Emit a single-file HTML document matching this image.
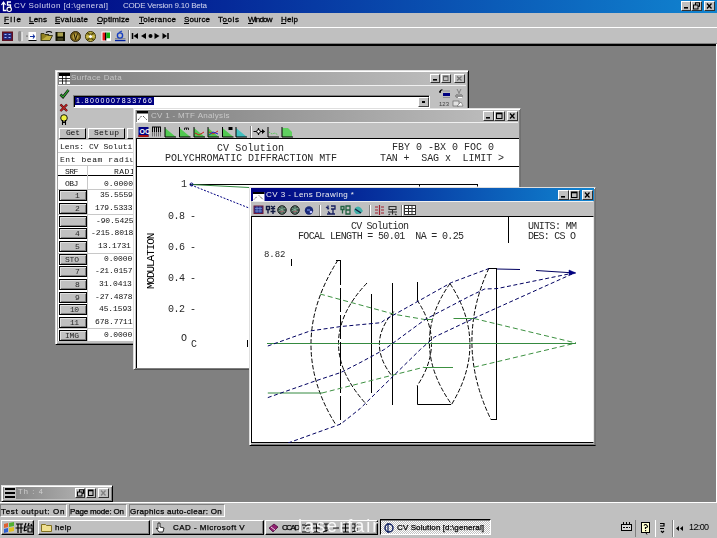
<!DOCTYPE html>
<html><head><meta charset="utf-8">
<style>
*{margin:0;padding:0;box-sizing:border-box}
html,body{width:717px;height:538px;overflow:hidden;background:#808080;font-family:"Liberation Sans",sans-serif;font-size:9px;color:#000}
.a{position:absolute}
.t{position:absolute;white-space:nowrap;line-height:1;will-change:transform}
.raise{position:absolute;background:#c0c0c0;border-top:1px solid #fff;border-left:1px solid #fff;border-right:1px solid #000;border-bottom:1px solid #000}
.cap{position:absolute;background:#c0c0c0;border-top:1px solid #fff;border-left:1px solid #fff;border-right:1px solid #303030;border-bottom:1px solid #303030}
.win{position:absolute;background:#c0c0c0;border-top:1px solid #dfdfdf;border-left:1px solid #dfdfdf;border-right:1px solid #000;border-bottom:1px solid #000;box-shadow:inset 1px 1px 0 #fff,inset -1px -1px 0 #808080}
.sunk{position:absolute;border-top:1px solid #808080;border-left:1px solid #808080;border-right:1px solid #fff;border-bottom:1px solid #fff}
</style></head><body>
<div class="a" style="left:0;top:0;width:717px;height:13px;background:linear-gradient(to right,#000080,#1084d0)"></div>
<svg class="a" style="left:0;top:0" width="13" height="13"><path d="M3.5 2.5v8h3" fill="none" stroke="#fff" stroke-width="1.3"/><path d="M1.5 5l2-3 2 3" fill="none" stroke="#fff" stroke-width="1.2"/><path d="M11 2h-3.5v3h3v2.5" fill="none" stroke="#fff" stroke-width="1.3"/><circle cx="9.2" cy="9.3" r="2.2" fill="#000040" stroke="#fff" stroke-width="1.1"/></svg>
<div class="t" style="left:14.00px;top:2px;font-size:8px;letter-spacing:0.413px;color:#e8e8f8;opacity:0.9;">CV&nbsp;Solution&nbsp;[d:\general]</div>
<div class="t" style="left:123.00px;top:2px;font-size:8px;letter-spacing:-0.214px;color:#e8e8f8;opacity:0.9;">CODE&nbsp;Version&nbsp;9.10&nbsp;Beta</div>
<div class="cap" style="left:681px;top:1px;width:10px;height:10px"></div><svg class="a" style="left:682px;top:2px" width="8" height="8"><rect x="2" y="5" width="4" height="1.6" fill="#000"/></svg>
<div class="cap" style="left:691px;top:1px;width:11px;height:10px"></div><svg class="a" style="left:692px;top:2px" width="9" height="8"><rect x="3.5" y="0.8" width="4" height="3.5" fill="none" stroke="#000" stroke-width="1"/><rect x="1.5" y="3" width="4.5" height="4" fill="#c0c0c0" stroke="#000" stroke-width="1"/></svg>
<div class="cap" style="left:704px;top:1px;width:11px;height:10px"></div><svg class="a" style="left:705px;top:2px" width="9" height="8"><path d="M2 1.5L6.5 6.5M6.5 1.5L2 6.5" stroke="#000" stroke-width="1.3"/></svg>
<div class="a" style="left:0;top:13px;width:717px;height:14px;background:#c0c0c0"></div>
<div class="t" style="left:4.00px;top:16px;font-size:8px;letter-spacing:1.367px;color:#000;-webkit-text-stroke:0.3px #000;">File</div>
<div class="a" style="left:4px;top:23px;width:5px;height:1px;background:#000"></div>
<div class="t" style="left:29.00px;top:16px;font-size:8px;letter-spacing:0.217px;color:#000;-webkit-text-stroke:0.3px #000;">Lens</div>
<div class="a" style="left:29px;top:23px;width:5px;height:1px;background:#000"></div>
<div class="t" style="left:55.00px;top:16px;font-size:8px;letter-spacing:0.264px;color:#000;-webkit-text-stroke:0.3px #000;">Evaluate</div>
<div class="a" style="left:55px;top:23px;width:5px;height:1px;background:#000"></div>
<div class="t" style="left:97.00px;top:16px;font-size:8px;letter-spacing:0.136px;color:#000;-webkit-text-stroke:0.3px #000;">Optimize</div>
<div class="a" style="left:97px;top:23px;width:5px;height:1px;background:#000"></div>
<div class="t" style="left:139.00px;top:16px;font-size:8px;letter-spacing:0.287px;color:#000;-webkit-text-stroke:0.3px #000;">Tolerance</div>
<div class="a" style="left:139px;top:23px;width:5px;height:1px;background:#000"></div>
<div class="t" style="left:184.00px;top:16px;font-size:8px;letter-spacing:0.130px;color:#000;-webkit-text-stroke:0.3px #000;">Source</div>
<div class="a" style="left:184px;top:23px;width:5px;height:1px;background:#000"></div>
<div class="t" style="left:218.00px;top:16px;font-size:8px;letter-spacing:0.575px;color:#000;-webkit-text-stroke:0.3px #000;">Tools</div>
<div class="a" style="left:223px;top:23px;width:5px;height:1px;background:#000"></div>
<div class="t" style="left:248.00px;top:16px;font-size:8px;letter-spacing:-0.780px;color:#000;-webkit-text-stroke:0.3px #000;">Window</div>
<div class="a" style="left:248px;top:23px;width:5px;height:1px;background:#000"></div>
<div class="t" style="left:281.00px;top:16px;font-size:8px;letter-spacing:0.183px;color:#000;-webkit-text-stroke:0.3px #000;">Help</div>
<div class="a" style="left:281px;top:23px;width:5px;height:1px;background:#000"></div>
<div class="a" style="left:0;top:27px;width:717px;height:1px;background:#fff"></div>
<div class="a" style="left:0;top:28px;width:717px;height:16px;background:#c0c0c0"></div>
<svg class="a" style="left:0;top:28px" width="180" height="16">
 <rect x="2" y="3.5" width="11" height="9.5" fill="#601020"/><rect x="3.5" y="5" width="8" height="6.5" fill="#202a80"/><path d="M4.5 6.5h2M8.5 6.5h2M4.5 9.5h2M8.5 9.5h2" stroke="#a0b8ff" stroke-width="1.2"/>
 <rect x="18" y="3" width="3.5" height="10.5" rx="1.7" fill="#8c8c8c"/><path d="M22 4v9" stroke="#fff"/>
 <rect x="28.5" y="4" width="7.5" height="8" fill="#fff"/><path d="M28.5 12.5h8" stroke="#000"/><path d="M30 8.5h4.5M33 6.5l1.5 2-1.5 2" stroke="#1030a0" stroke-width="1.1" fill="none"/><circle cx="27" cy="8" r="0.6" fill="#000"/>
 <path d="M41 12.5l2.5-5h9l-2.5 5z" fill="#c0b040" stroke="#202000" stroke-width="0.8"/><path d="M41 12.5v-7h3l1 1h4" fill="#908020" stroke="#202000" stroke-width="0.8"/><path d="M46 4.5q3-2 6 0" fill="none" stroke="#000" stroke-width="1.2"/>
 <rect x="55.5" y="4" width="9.5" height="9" fill="#101000"/><rect x="57.5" y="4.5" width="5.5" height="4" fill="#a8a050"/><rect x="57.5" y="10" width="5.5" height="2.5" fill="#404020"/>
 <circle cx="75.5" cy="8.5" r="5" fill="#786018" stroke="#201800" stroke-width="0.9"/><circle cx="75.5" cy="8.5" r="3" fill="#b8a040"/><path d="M74 5.5l1.5 6 2-6" stroke="#201800" fill="none"/>
 <circle cx="90.5" cy="8.5" r="5" fill="#c8b848" stroke="#383000" stroke-width="1"/><path d="M87 6h7M87 11h7M88 5l5 7M93 5l-5 7" stroke="#383000" stroke-width="0.8"/><circle cx="90.5" cy="8.5" r="1.6" fill="#fff"/>
 <rect x="101.5" y="3.5" width="9.5" height="9.5" fill="#fff"/><rect x="102.5" y="4.5" width="2.5" height="8" fill="#e01818"/><rect x="105" y="4.5" width="1.5" height="8" fill="#000"/><rect x="106.5" y="4.5" width="3.5" height="6" fill="#10b010"/><rect x="106.5" y="10.5" width="3.5" height="2" fill="#fff"/>
 <path d="M115 12.5h10.5" stroke="#0020a0" stroke-width="1.4"/><path d="M115 10.5h10.5" stroke="#808080" stroke-width="0.8"/><circle cx="120" cy="7.5" r="2.6" fill="none" stroke="#1840c0" stroke-width="1.4"/><path d="M119 4.5l3-1.5" stroke="#1840c0" stroke-width="1.2"/>
 <path d="M128.5 2v13" stroke="#808080"/><path d="M129.5 2v13" stroke="#fff"/>
 <path d="M132.5 5v6" stroke="#000" stroke-width="1.5"/><path d="M138 5l-4.5 3 4.5 3z" fill="#000"/>
 <path d="M146 5l-5 3 5 3z" fill="#000"/><circle cx="150.5" cy="8" r="2" fill="#000"/>
 <path d="M154.5 5l5 3-5 3z" fill="#000"/><path d="M162.5 5l4.5 3-4.5 3z" fill="#000"/><path d="M168 5v6" stroke="#000" stroke-width="1.5"/>
</svg>
<div class="a" style="left:0;top:43px;width:717px;height:1px;background:#808080"></div>
<div class="a" style="left:0;top:44px;width:716px;height:2px;background:#000"></div>
<div class="a" style="left:716px;top:44px;width:1px;height:459px;background:#fff"></div>
<div class="win" style="left:55px;top:70px;width:414px;height:275px"></div>
<div class="a" style="left:58px;top:72px;width:408px;height:13px;background:linear-gradient(to right,#808080,#c0c0c0)"></div>
<svg class="a" style="left:59px;top:73px" width="11" height="11"><rect x="0" y="0" width="11" height="11" fill="#fff"/><rect x="0" y="0" width="11" height="3" fill="#000"/><path d="M0 5.5h11M0 8h11M3.5 3v8M7 3v8" stroke="#000" stroke-width="0.8"/></svg>
<div class="t" style="left:71.00px;top:74px;font-size:8px;letter-spacing:0.355px;color:#c4c4c4;">Surface&nbsp;Data</div>
<div class="a" style="left:58px;top:85px;width:408px;height:1px;background:#f0f0f0"></div>
<div class="cap" style="left:430px;top:74px;width:10px;height:9px"></div><svg class="a" style="left:431px;top:75px" width="8" height="7"><rect x="2" y="4" width="4" height="1.6" fill="#000"/></svg>
<div class="cap" style="left:441px;top:74px;width:10px;height:9px"></div><svg class="a" style="left:442px;top:75px" width="8" height="7"><rect x="1.5" y="1" width="4.5" height="4.5" fill="none" stroke="#606060" stroke-width="1"/><rect x="1.5" y="1" width="4.5" height="1.3" fill="#606060"/></svg>
<div class="cap" style="left:454px;top:74px;width:11px;height:9px"></div><svg class="a" style="left:455px;top:75px" width="9" height="7"><path d="M2 1.5L6.5 5.5M6.5 1.5L2 5.5" stroke="#707070" stroke-width="1.3"/></svg>
<svg class="a" style="left:59px;top:88px" width="12" height="38">
 <path d="M1.5 6.5l2.5 2.5 5.5-7" fill="none" stroke="#000" stroke-width="2.6"/><path d="M1.5 6.5l2.5 2.5 5.5-7" fill="none" stroke="#30a030" stroke-width="1.3"/>
 <path d="M1.5 16.5l6.5 6.5M8 16.5l-6.5 6.5" stroke="#401010" stroke-width="2.4"/><path d="M1.5 16.5l6.5 6.5M8 16.5l-6.5 6.5" stroke="#c02020" stroke-width="1.1"/>
 <circle cx="5" cy="30" r="3.3" fill="#f0f040" stroke="#000" stroke-width="0.9"/><path d="M3.5 32v5M6.5 32v5M3.5 34.5h3" stroke="#000" stroke-width="1.1"/>
</svg>
<div class="a" style="left:73px;top:95px;width:357px;height:13px;background:#fff;border-top:1px solid #808080;border-left:1px solid #808080;border-right:1px solid #fff;border-bottom:1px solid #fff;box-shadow:inset 1px 1px 0 #000"></div>
<div class="a" style="left:75px;top:97px;width:79px;height:8px;background:#000080"></div>
<div class="t" style="left:76.00px;top:97px;font-size:7px;letter-spacing:1.396px;color:#fff;">1.8000007833766</div>
<div class="raise" style="left:418px;top:97px;width:11px;height:10px;border-color:#fff #404040 #404040 #fff"></div>
<div class="a" style="left:422px;top:101px;width:3px;height:2px;background:#000"></div>
<svg class="a" style="left:438px;top:88px" width="28" height="20">
 <path d="M1.5 4.5q1-3 3-2.5" fill="none" stroke="#000" stroke-width="1.2"/><path d="M1 4l2-2 0 3z" fill="#000"/><rect x="5" y="5" width="7" height="3" fill="#000080"/><path d="M5 3h7M5 9.5h7" stroke="#909090"/>
 <path d="M19 1l2 4 2-4M21 5v2" stroke="#808080" fill="none"/><circle cx="19" cy="8" r="1.3" fill="none" stroke="#707070"/><circle cx="23" cy="8" r="1.3" fill="none" stroke="#707070"/><path d="M20 9.5h4" stroke="#fff"/>
 <text x="1" y="18" font-size="6" fill="#404040" font-family="Liberation Sans">123</text>
 <rect x="15" y="13" width="6" height="5" fill="#e0e0e0" stroke="#505050" stroke-width="0.6"/><path d="M19 18l4-4 2 4z" fill="#fff" stroke="#505050" stroke-width="0.5"/>
</svg>
<div class="raise" style="left:59px;top:128px;width:27px;height:11px"></div>
<div class="t" style="left:66.00px;top:129px;font-size:8px;letter-spacing:-0.200px;color:#111;font-family:'Liberation Mono',monospace;">Get</div>
<div class="raise" style="left:88px;top:128px;width:37px;height:11px"></div>
<div class="t" style="left:94.00px;top:129px;font-size:8px;letter-spacing:0.250px;color:#111;font-family:'Liberation Mono',monospace;">Setup</div>
<div class="raise" style="left:127px;top:128px;width:10px;height:11px"></div>
<div class="a" style="left:57px;top:140px;width:78px;height:201px;background:#fff;border-left:1px solid #a0a0a0"></div>
<div class="a" style="left:58px;top:152px;width:76px;height:1px;background:#c8c8c8"></div>
<div class="a" style="left:58px;top:165px;width:76px;height:1px;background:#c8c8c8"></div>
<div class="a" style="left:58px;top:189px;width:76px;height:1px;background:#c8c8c8"></div>
<div class="a" style="left:58px;top:214px;width:76px;height:1px;background:#c8c8c8"></div>
<div class="a" style="left:58px;top:253px;width:76px;height:1px;background:#c8c8c8"></div>
<div class="a" style="left:58px;top:328px;width:76px;height:1px;background:#c8c8c8"></div>
<div class="a" style="left:58px;top:175px;width:76px;height:1px;background:#000"></div>
<div class="a" style="left:87px;top:166px;width:1px;height:175px;background:#c8c8c8"></div>
<div class="t" style="left:60.00px;top:143px;font-size:8px;letter-spacing:0.025px;color:#111;font-family:'Liberation Mono',monospace;">Lens:&nbsp;CV&nbsp;Solution</div>
<div class="t" style="left:60.00px;top:156px;font-size:8px;letter-spacing:0.571px;color:#111;font-family:'Liberation Mono',monospace;">Ent&nbsp;beam&nbsp;radius</div>
<div class="t" style="left:65.40px;top:168px;font-size:8px;letter-spacing:-0.500px;color:#111;font-family:'Liberation Mono',monospace;">SRF</div>
<div class="t" style="left:113.70px;top:168px;font-size:8px;letter-spacing:0.500px;color:#111;font-family:'Liberation Mono',monospace;">RADIUS</div>
<div class="t" style="left:65.40px;top:180px;font-size:8px;letter-spacing:-0.500px;color:#111;font-family:'Liberation Mono',monospace;">OBJ</div>
<div class="t" style="left:104.00px;top:180px;font-size:8px;letter-spacing:0.040px;color:#111;font-family:'Liberation Mono',monospace;">0.0000</div>
<div class="a" style="left:59px;top:190px;width:28px;height:11px;background:#c0c0c0;border:1px solid #000;box-shadow:inset 1px 1px 0 #e0e0e0,inset -1px -1px 0 #808080"></div>
<div class="t" style="left:75.00px;top:192px;font-size:8px;letter-spacing:0.000px;color:#282828;font-family:'Liberation Mono',monospace;">1</div>
<div class="t" style="left:99.60px;top:191px;font-size:8px;letter-spacing:-0.117px;color:#111;font-family:'Liberation Mono',monospace;">35.5559</div>
<div class="a" style="left:59px;top:203px;width:28px;height:11px;background:#c0c0c0;border:1px solid #000;box-shadow:inset 1px 1px 0 #e0e0e0,inset -1px -1px 0 #808080"></div>
<div class="t" style="left:75.00px;top:205px;font-size:8px;letter-spacing:0.000px;color:#282828;font-family:'Liberation Mono',monospace;">2</div>
<div class="t" style="left:95.00px;top:204px;font-size:8px;letter-spacing:-0.114px;color:#111;font-family:'Liberation Mono',monospace;">179.5333</div>
<div class="a" style="left:59px;top:216px;width:28px;height:11px;background:#c0c0c0;border:1px solid #000;box-shadow:inset 1px 1px 0 #e0e0e0,inset -1px -1px 0 #808080"></div>
<div class="t" style="left:96.00px;top:217px;font-size:8px;letter-spacing:-0.114px;color:#111;font-family:'Liberation Mono',monospace;">-90.5425</div>
<div class="a" style="left:59px;top:228px;width:28px;height:11px;background:#c0c0c0;border:1px solid #000;box-shadow:inset 1px 1px 0 #e0e0e0,inset -1px -1px 0 #808080"></div>
<div class="t" style="left:75.00px;top:230px;font-size:8px;letter-spacing:0.000px;color:#282828;font-family:'Liberation Mono',monospace;">4</div>
<div class="t" style="left:91.00px;top:229px;font-size:8px;letter-spacing:-0.112px;color:#111;font-family:'Liberation Mono',monospace;">-215.8018</div>
<div class="a" style="left:59px;top:241px;width:28px;height:11px;background:#c0c0c0;border:1px solid #000;box-shadow:inset 1px 1px 0 #e0e0e0,inset -1px -1px 0 #808080"></div>
<div class="t" style="left:75.00px;top:243px;font-size:8px;letter-spacing:0.000px;color:#282828;font-family:'Liberation Mono',monospace;">5</div>
<div class="t" style="left:98.00px;top:242px;font-size:8px;letter-spacing:-0.117px;color:#111;font-family:'Liberation Mono',monospace;">13.1731</div>
<div class="a" style="left:59px;top:254px;width:28px;height:11px;background:#c0c0c0;border:1px solid #000;box-shadow:inset 1px 1px 0 #e0e0e0,inset -1px -1px 0 #808080"></div>
<div class="t" style="left:65.00px;top:256px;font-size:8px;letter-spacing:-0.200px;color:#282828;font-family:'Liberation Mono',monospace;">STO</div>
<div class="t" style="left:104.00px;top:255px;font-size:8px;letter-spacing:-0.120px;color:#111;font-family:'Liberation Mono',monospace;">0.0000</div>
<div class="a" style="left:59px;top:266px;width:28px;height:11px;background:#c0c0c0;border:1px solid #000;box-shadow:inset 1px 1px 0 #e0e0e0,inset -1px -1px 0 #808080"></div>
<div class="t" style="left:75.00px;top:268px;font-size:8px;letter-spacing:0.000px;color:#282828;font-family:'Liberation Mono',monospace;">7</div>
<div class="t" style="left:95.00px;top:267px;font-size:8px;letter-spacing:-0.114px;color:#111;font-family:'Liberation Mono',monospace;">-21.0157</div>
<div class="a" style="left:59px;top:279px;width:28px;height:11px;background:#c0c0c0;border:1px solid #000;box-shadow:inset 1px 1px 0 #e0e0e0,inset -1px -1px 0 #808080"></div>
<div class="t" style="left:75.00px;top:281px;font-size:8px;letter-spacing:0.000px;color:#282828;font-family:'Liberation Mono',monospace;">8</div>
<div class="t" style="left:99.00px;top:280px;font-size:8px;letter-spacing:-0.117px;color:#111;font-family:'Liberation Mono',monospace;">31.0413</div>
<div class="a" style="left:59px;top:292px;width:28px;height:11px;background:#c0c0c0;border:1px solid #000;box-shadow:inset 1px 1px 0 #e0e0e0,inset -1px -1px 0 #808080"></div>
<div class="t" style="left:75.00px;top:294px;font-size:8px;letter-spacing:0.000px;color:#282828;font-family:'Liberation Mono',monospace;">9</div>
<div class="t" style="left:95.00px;top:293px;font-size:8px;letter-spacing:-0.114px;color:#111;font-family:'Liberation Mono',monospace;">-27.4878</div>
<div class="a" style="left:59px;top:304px;width:28px;height:11px;background:#c0c0c0;border:1px solid #000;box-shadow:inset 1px 1px 0 #e0e0e0,inset -1px -1px 0 #808080"></div>
<div class="t" style="left:70.00px;top:306px;font-size:8px;letter-spacing:-0.600px;color:#282828;font-family:'Liberation Mono',monospace;">10</div>
<div class="t" style="left:99.00px;top:305px;font-size:8px;letter-spacing:-0.117px;color:#111;font-family:'Liberation Mono',monospace;">45.1593</div>
<div class="a" style="left:59px;top:317px;width:28px;height:11px;background:#c0c0c0;border:1px solid #000;box-shadow:inset 1px 1px 0 #e0e0e0,inset -1px -1px 0 #808080"></div>
<div class="t" style="left:70.00px;top:319px;font-size:8px;letter-spacing:-0.600px;color:#282828;font-family:'Liberation Mono',monospace;">11</div>
<div class="t" style="left:95.00px;top:318px;font-size:8px;letter-spacing:-0.114px;color:#111;font-family:'Liberation Mono',monospace;">678.7711</div>
<div class="a" style="left:59px;top:330px;width:28px;height:11px;background:#c0c0c0;border:1px solid #000;box-shadow:inset 1px 1px 0 #e0e0e0,inset -1px -1px 0 #808080"></div>
<div class="t" style="left:65.00px;top:332px;font-size:8px;letter-spacing:-0.200px;color:#282828;font-family:'Liberation Mono',monospace;">IMG</div>
<div class="t" style="left:104.00px;top:331px;font-size:8px;letter-spacing:-0.120px;color:#111;font-family:'Liberation Mono',monospace;">0.0000</div>
<div class="win" style="left:133px;top:108px;width:388px;height:262px;border-right-color:#707070;border-bottom-color:#505050"></div>
<div class="a" style="left:136px;top:110px;width:382px;height:12px;background:linear-gradient(to right,#808080,#c0c0c0)"></div>
<svg class="a" style="left:137px;top:111px" width="12" height="11"><rect width="11" height="11" fill="#fff"/><rect width="11" height="2.5" fill="#000"/><path d="M1 9l3.5-4M6 5l4 4" fill="none" stroke="#000" stroke-width="0.8" stroke-dasharray="1.2 0.8"/></svg>
<div class="t" style="left:151.00px;top:112px;font-size:8px;letter-spacing:0.283px;color:#c8c8c8;">CV&nbsp;1&nbsp;-&nbsp;MTF&nbsp;Analysis</div>
<div class="a" style="left:136px;top:122px;width:382px;height:1px;background:#f0f0f0"></div>
<div class="cap" style="left:483px;top:111px;width:11px;height:10px"></div><svg class="a" style="left:484px;top:112px" width="9" height="8"><rect x="2" y="5" width="4" height="1.6" fill="#000"/></svg>
<div class="cap" style="left:494px;top:111px;width:11px;height:10px"></div><svg class="a" style="left:495px;top:112px" width="9" height="8"><rect x="1.5" y="1" width="5.5" height="5.5" fill="none" stroke="#000" stroke-width="1"/><rect x="1.5" y="1" width="5.5" height="1.3" fill="#000"/></svg>
<div class="cap" style="left:507px;top:111px;width:11px;height:10px"></div><svg class="a" style="left:508px;top:112px" width="9" height="8"><path d="M2 1.5L6.5 6.5M6.5 1.5L2 6.5" stroke="#000" stroke-width="1.3"/></svg>
<svg class="a" style="left:136px;top:123px" width="160" height="15">
 <rect x="2.5" y="4" width="10" height="10" fill="#000080"/><rect x="2.5" y="12" width="10" height="2" fill="#a01010"/><text x="3.5" y="11" font-size="7" fill="#fff" font-family="Liberation Sans" font-weight="bold">OC</text>
 <path d="M16.5 4v5M18.5 4v5M20.5 4v5M22.5 4v5M24.5 4v5" stroke="#000"/><path d="M16.5 9v4.5M18.5 9v4.5M20.5 9v4.5M22.5 9v4.5M24.5 9v4.5" stroke="#707070"/><path d="M16 4h9" stroke="#000"/>
 <g transform="translate(28,4)"><path d="M1 1v9h11z" fill="#50c850"/><path d="M1 0v10h11" fill="none" stroke="#000" stroke-width="1"/></g>
 <g transform="translate(42.5,4)"><path d="M1 1v9h11z" fill="#50c850"/><path d="M1 0v10h11" fill="none" stroke="#000" stroke-width="1"/><path d="M6 3v-2h4v2M8 1v2" stroke="#000" stroke-width="0.8" fill="none"/></g>
 <g transform="translate(57,4)"><path d="M1 1v9h11z" fill="#50c850"/><path d="M1 0v10h11" fill="none" stroke="#000" stroke-width="1"/><path d="M2 6l4 2 5-3" stroke="#d02020" fill="none"/></g>
 <g transform="translate(71,4)"><path d="M1 1v9h11z" fill="#50c850"/><path d="M1 0v10h11" fill="none" stroke="#000" stroke-width="1"/><path d="M2 5l4 2 5-3" stroke="#d02020" fill="none"/><path d="M2 8l4-3 5 2" stroke="#2020d0" fill="none"/></g>
 <g transform="translate(85.5,4)"><path d="M1 1v9h11z" fill="#50c850"/><path d="M1 0v10h11" fill="none" stroke="#000" stroke-width="1"/><rect x="7" y="0" width="4" height="3" fill="#000"/></g>
 <g transform="translate(99,4)"><path d="M1 1v9h11z" fill="#40c0c0"/><path d="M1 0v10h11" fill="none" stroke="#000" stroke-width="1"/></g>
 <path d="M114.5 3v12" stroke="#808080"/><path d="M115.5 3v12" stroke="#fff"/>
 <path d="M117.5 8.5h11M122.5 5v7" stroke="#000" stroke-width="1.2"/><path d="M126 6l3 2.5-3 2.5z" fill="#000"/><circle cx="122.5" cy="8.5" r="1.8" fill="#fff" stroke="#000"/>
 <g transform="translate(131,4)"><path d="M1 0v10h11" fill="none" stroke="#000"/><path d="M2 5l3 2 3-1 3 2" stroke="#50c850" fill="none" stroke-dasharray="1.5 1"/></g>
 <g transform="translate(145,4)"><path d="M1 1h6l4 4v5H1z" fill="#60d060"/><path d="M1 0v10h11" fill="none" stroke="#000"/></g>
</svg>
<div class="a" style="left:136px;top:138px;width:383px;height:230px;background:#fff;border-top:1px solid #000;border-left:1px solid #000"></div>
<div class="t" style="left:217.00px;top:144px;font-size:10px;letter-spacing:0.100px;color:#282828;font-family:'Liberation Mono',monospace;">CV&nbsp;Solution</div>
<div class="t" style="left:165.00px;top:154px;font-size:10px;letter-spacing:-0.071px;color:#282828;font-family:'Liberation Mono',monospace;">POLYCHROMATIC&nbsp;DIFFRACTION&nbsp;MTF</div>
<div class="t" style="left:392.00px;top:143px;font-size:10px;letter-spacing:0.000px;color:#282828;font-family:'Liberation Mono',monospace;">FBY&nbsp;0&nbsp;-BX&nbsp;0&nbsp;FOC&nbsp;0</div>
<div class="t" style="left:380.00px;top:154px;font-size:10px;letter-spacing:-0.100px;color:#282828;font-family:'Liberation Mono',monospace;">TAN&nbsp;+&nbsp;&nbsp;SAG&nbsp;x&nbsp;&nbsp;LIMIT&nbsp;&gt;</div>
<div class="a" style="left:137px;top:166px;width:382px;height:1px;background:#000"></div>
<div class="t" style="left:181.30px;top:180px;font-size:10px;letter-spacing:0.000px;color:#282828;font-family:'Liberation Mono',monospace;">1</div>
<div class="t" style="left:168.00px;top:212px;font-size:10px;letter-spacing:-0.500px;color:#282828;font-family:'Liberation Mono',monospace;">0.8&nbsp;-</div>
<div class="t" style="left:168.00px;top:243px;font-size:10px;letter-spacing:-0.500px;color:#282828;font-family:'Liberation Mono',monospace;">0.6&nbsp;-</div>
<div class="t" style="left:168.00px;top:274px;font-size:10px;letter-spacing:-0.500px;color:#282828;font-family:'Liberation Mono',monospace;">0.4&nbsp;-</div>
<div class="t" style="left:168.00px;top:305px;font-size:10px;letter-spacing:-0.500px;color:#282828;font-family:'Liberation Mono',monospace;">0.2&nbsp;-</div>
<div class="t" style="left:181.00px;top:334px;font-size:10px;letter-spacing:0.000px;color:#282828;font-family:'Liberation Mono',monospace;">O</div>
<div class="t" style="left:190.50px;top:340px;font-size:10px;letter-spacing:0.000px;color:#282828;font-family:'Liberation Mono',monospace;">C</div>
<div class="a" style="left:247px;top:340px;width:1px;height:7px;background:#000"></div>
<div class='t' style="left:146.12px;top:289.00px;font-size:11px;font-family:'Liberation Mono',monospace;letter-spacing:-1.078px;transform:rotate(-90deg);transform-origin:0 0">MODULATION</div>
<svg class="a" style="left:136px;top:138px" width="383" height="230">
 <path d="M54 46.5H341" stroke="#000" stroke-width="1"/>
 <path d="M283.5 46v2.5M341.5 46v2.5" stroke="#000"/>
 <path d="M55 46.5L113 49.5" stroke="#358a40" stroke-width="1"/>
 <path d="M55 47L113 70" stroke="#000080" stroke-width="1" stroke-dasharray="2 1.5"/>
 <circle cx="55.5" cy="46.5" r="1.5" fill="none" stroke="#000080"/>
</svg>
<div class="win" style="left:249px;top:187px;width:347px;height:259px;border-right-color:#707070"></div>
<div class="a" style="left:251px;top:188px;width:343px;height:13px;background:linear-gradient(to right,#000080,#1084d0)"></div>
<svg class="a" style="left:253px;top:191px" width="12" height="10"><rect y="1" width="11.5" height="9" fill="#fff"/><rect y="1" width="11.5" height="2" fill="#000"/><path d="M1 8.5l3-3M6 4.5l4 4" fill="none" stroke="#000" stroke-width="0.8" stroke-dasharray="1.2 0.8"/></svg>
<div class="t" style="left:266.00px;top:191px;font-size:8px;letter-spacing:0.442px;color:#f0f0f0;">CV&nbsp;3&nbsp;-&nbsp;Lens&nbsp;Drawing&nbsp;*</div>
<div class="a" style="left:252px;top:201px;width:341px;height:1px;background:#f0f0f0"></div>
<div class="cap" style="left:558px;top:190px;width:11px;height:10px"></div><svg class="a" style="left:559px;top:191px" width="9" height="8"><rect x="2" y="5" width="4" height="1.6" fill="#000"/></svg>
<div class="cap" style="left:569px;top:190px;width:11px;height:10px"></div><svg class="a" style="left:570px;top:191px" width="9" height="8"><rect x="1.5" y="1" width="5.5" height="5.5" fill="none" stroke="#000" stroke-width="1"/><rect x="1.5" y="1" width="5.5" height="1.3" fill="#000"/></svg>
<div class="cap" style="left:582px;top:190px;width:11px;height:10px"></div><svg class="a" style="left:583px;top:191px" width="9" height="8"><path d="M2 1.5L6.5 6.5M6.5 1.5L2 6.5" stroke="#000" stroke-width="1.3"/></svg>
<svg class="a" style="left:251px;top:202px" width="170" height="15">
 <rect x="2.5" y="3.5" width="10" height="8.5" fill="#701838"/><rect x="3.5" y="4.5" width="8" height="6.5" fill="#28348a"/><path d="M4 6.5h7M4 9h7M6 4.5v6M9 4.5v6" stroke="#8098e0" stroke-width="0.7"/>
 <path d="M15.5 4.5h3v3h-3zM17 7.5v4M20 4l4 3M24 4l-4 3M22 6v6M19.5 9.5h5" stroke="#101840" stroke-width="1.4" fill="none"/>
 <circle cx="31" cy="8" r="4.3" fill="#405850" stroke="#202020"/><path d="M28 6l6 4M27.5 9l7-3M31 4v8" stroke="#90c0a0" stroke-width="0.7"/><path d="M29 10l4-1" stroke="#c06070" stroke-width="0.8"/>
 <circle cx="44" cy="8" r="4.3" fill="#405850" stroke="#202020"/><path d="M41 6l6 4M40.5 9l7-3M44 4v8" stroke="#90c0a0" stroke-width="0.7"/><path d="M42 10l4-1" stroke="#c06070" stroke-width="0.8"/>
 <circle cx="58" cy="8.5" r="4.2" fill="#182878"/><path d="M56 8h3" stroke="#80a0ff"/><circle cx="60" cy="10" r="1.3" fill="#c0c0ff"/>
 <path d="M68.5 3v11" stroke="#808080"/><path d="M69.5 3v11" stroke="#fff"/>
 <path d="M75 5l3 2M77 3.5v4M80 4h4v3h-4M82 7v5M76 12h8M77 9.5l2 2" stroke="#182060" stroke-width="1.3" fill="none"/>
 <path d="M90 4.5h3v3h-3zM91.5 7.5v4M95 4h4v8h-4zM95 8h4" stroke="#206040" stroke-width="1.3" fill="none"/>
 <path d="M104 6q3-3 6 0l2 3-3 3h-4l-2-3z" fill="#40b0a8"/><path d="M104 7l6 4" stroke="#102040" stroke-width="1.4"/>
 <path d="M118.5 3v11" stroke="#808080"/><path d="M119.5 3v11" stroke="#fff"/>
 <path d="M124 5h3M124 8h3M124 11h3M130 5h3M130 8h3M130 11h3M128.5 3v10" stroke="#a02030" stroke-width="1.2"/>
 <path d="M138 4.5h7v3h-7zM141.5 7.5v5M137 10h9M139 12l-1.5 1M144 12l1.5 1" stroke="#303030" stroke-width="1.1" fill="none"/>
 <path d="M150.5 3v11" stroke="#808080"/><path d="M151.5 3v11" stroke="#fff"/>
 <rect x="153.5" y="3.5" width="11" height="9" fill="#fff" stroke="#303030" stroke-width="1"/><path d="M154 6.5h10M154 9.5h10M157.5 4v8M161 4v8" stroke="#303030" stroke-width="1"/>
</svg>
<div class="a" style="left:251px;top:216px;width:343px;height:227px;background:#fff;border-top:1px solid #000;border-left:1px solid #000;border-bottom:1px solid #000;border-right:1px solid #e8e8e8"></div>
<div class="t" style="left:351.00px;top:222px;font-size:10px;letter-spacing:-0.800px;color:#282828;font-family:'Liberation Mono',monospace;">CV&nbsp;Solution</div>
<div class="t" style="left:297.50px;top:232px;font-size:10px;letter-spacing:-0.667px;color:#282828;font-family:'Liberation Mono',monospace;">FOCAL&nbsp;LENGTH&nbsp;=&nbsp;50.01&nbsp;&nbsp;NA&nbsp;=&nbsp;0.25</div>
<div class="t" style="left:528.00px;top:222px;font-size:10px;letter-spacing:-0.625px;color:#282828;font-family:'Liberation Mono',monospace;">UNITS:&nbsp;MM</div>
<div class="t" style="left:528.00px;top:232px;font-size:10px;letter-spacing:-0.750px;color:#282828;font-family:'Liberation Mono',monospace;">DES:&nbsp;CS&nbsp;O</div>
<div class="a" style="left:508px;top:217px;width:1px;height:26px;background:#000"></div>
<div class="t" style="left:264.00px;top:251px;font-size:9px;letter-spacing:-0.033px;color:#282828;font-family:'Liberation Mono',monospace;">8.82</div>
<div class="a" style="left:291px;top:259px;width:1px;height:7px;background:#000"></div>
<svg class="a" style="left:0;top:0" width="717" height="538" viewBox="0 0 717 538">
 <defs><clipPath id="cl"><rect x="252" y="217" width="342" height="226"/></clipPath></defs>
 <g clip-path="url(#cl)" fill="none" stroke-width="1">
  <g stroke="#000" stroke-dasharray="4.5 2">
   <path d="M338 260Q285 343.5 336 425"/>
   <path d="M367 283Q310 343 367 405"/>
   <path d="M393.7 311.6Q366 343 392 376"/>
   <path d="M417 300Q446 343 417 386"/>
   <path d="M450 283.5Q408 343 451.6 404.4"/>
   <path d="M450 283.5Q489 343 451.6 404.4"/>
   <path d="M489 268Q454 343 490.7 419"/>
  </g>
  <g stroke="#000">
   <path d="M336 260.5H341"/>
   <path d="M371.5 294V393"/>
   <path d="M392.5 283V405"/>
   <path d="M417.5 282V300M417.5 386V404.5H451"/>
   <path d="M496.5 268V419M489 268.5H497M490.7 419.5H497"/>
  </g>
  <path d="M267 343.5H576M267.8 393H322" stroke="#358a40"/>
  <path d="M340.5 261V424" stroke="#000" stroke-dasharray="24 3"/>
  <g stroke="#3c9040" stroke-dasharray="5 3">
   <path d="M320 294L395 314.4L424 319.4"/>
   <path d="M474 318.5L576 343"/>
   <path d="M322 393L424 367.2"/>
   <path d="M474 367.2L576 343"/>
  </g>
  <path d="M424 319.5H433M453.5 318.5H474M424 367.5H453" stroke="#3c9040"/>
  <g stroke="#000060" stroke-dasharray="4 2.5">
   <path d="M267.8 346L310 331L341 326.5L381 322.7L384.3 320.2L451.3 282.6L489 268.5"/>
   <path d="M267.8 397.6L315.8 380.8L340.8 372.5L360 362.7L384.3 349.5L425.3 319.4L470 296L484.7 289L497 288.6L575 272.7"/>
   <path d="M288 443L340.8 424L360 408.7L420.3 349.5L434.5 337L474.6 318L575 272.7"/>
  </g>
  <path d="M497 269L520 269.5M536 270.5L572 272.8" stroke="#000060"/>
  <path d="M569 270L576 273L569 275z" fill="#000080" stroke="#000080" stroke-width="0.5"/>
 </g>
</svg>
<div class="win" style="left:1px;top:485px;width:112px;height:17px"></div>
<div class="a" style="left:3px;top:487px;width:108px;height:12px;background:linear-gradient(to right,#808080,#c0c0c0)"></div>
<svg class="a" style="left:4px;top:487px" width="12" height="12"><rect width="12" height="12" fill="#c0c0c0"/><rect x="1" y="1" width="10" height="2" fill="#000"/><rect x="1" y="5" width="10" height="2" fill="#000"/><rect x="1" y="9" width="10" height="2" fill="#000"/></svg>
<div class="t" style="left:18.00px;top:488px;font-size:7.5px;letter-spacing:1.170px;color:#d0d0d0;">Th&nbsp;:&nbsp;4</div>
<div class="cap" style="left:75px;top:488px;width:10px;height:10px"></div><svg class="a" style="left:76px;top:489px" width="8" height="8"><rect x="3.5" y="0.8" width="4" height="3.5" fill="none" stroke="#000" stroke-width="1"/><rect x="1.5" y="3" width="4.5" height="4" fill="#c0c0c0" stroke="#000" stroke-width="1"/></svg>
<div class="cap" style="left:86px;top:488px;width:10px;height:10px"></div><svg class="a" style="left:87px;top:489px" width="8" height="8"><rect x="1.5" y="1" width="4.5" height="5.5" fill="none" stroke="#000" stroke-width="1"/><rect x="1.5" y="1" width="4.5" height="1.3" fill="#000"/></svg>
<div class="cap" style="left:98px;top:488px;width:11px;height:10px"></div><svg class="a" style="left:99px;top:489px" width="9" height="8"><path d="M2 1.5L6.5 6.5M6.5 1.5L2 6.5" stroke="#808080" stroke-width="1.3"/></svg>
<div class="a" style="left:0;top:502px;width:717px;height:15px;background:#c0c0c0;border-top:1px solid #fff"></div>
<div class="sunk" style="left:0px;top:504px;width:67px;height:13px"></div>
<div class="sunk" style="left:68.5px;top:504px;width:58.0px;height:13px"></div>
<div class="sunk" style="left:128.5px;top:504px;width:96.0px;height:13px"></div>
<div class="t" style="left:1.00px;top:508px;font-size:8px;letter-spacing:0.654px;color:#000;-webkit-text-stroke:0.25px #000;">Test&nbsp;output:&nbsp;On</div>
<div class="t" style="left:70.00px;top:508px;font-size:8px;letter-spacing:-0.171px;color:#000;-webkit-text-stroke:0.25px #000;">Page&nbsp;mode:&nbsp;On</div>
<div class="t" style="left:130.30px;top:508px;font-size:8px;letter-spacing:0.307px;color:#000;-webkit-text-stroke:0.25px #000;">Graphics&nbsp;auto-clear:&nbsp;On</div>
<div class="a" style="left:0;top:517px;width:717px;height:21px;background:#c0c0c0"></div>
<div class="raise" style="left:1px;top:520px;width:33px;height:15px;box-shadow:inset -1px -1px 0 #808080"></div>
<svg class="a" style="left:3px;top:522px" width="12" height="11"><path d="M1 2l4-1v4l-4 1z" fill="#e06030"/><path d="M6 1l5-1v4l-5 1z" fill="#50b030"/><path d="M1 7l4-1v4l-4 1z" fill="#3060d0"/><path d="M6 6l5-1v4l-5 1z" fill="#e0c020"/></svg>
<svg class="a" style="left:15px;top:522px" width="18" height="11" fill="none" stroke="#000" stroke-width="1.2">
 <path d="M1 2h7M0.5 6h8M3 2v9M6 2v9"/>
 <path d="M11 1l-1.5 4h3M10 5l-1 4M9 9l3-1"/><path d="M14 1l-1 3h4l-1-2M13 6h4v4h-4z"/>
</svg>
<div class="raise" style="left:38px;top:520px;width:112px;height:15px;box-shadow:inset -1px -1px 0 #808080"></div>
<svg class="a" style="left:41px;top:523px" width="11" height="9"><path d="M0.5 1.5h4l1 1h5v6h-10z" fill="#f0e090" stroke="#807020"/></svg>
<div class="t" style="left:54.50px;top:524px;font-size:8px;letter-spacing:0.383px;color:#000;-webkit-text-stroke:0.25px #000;">help</div>
<div class="raise" style="left:152px;top:520px;width:112px;height:15px;box-shadow:inset -1px -1px 0 #808080"></div>
<svg class="a" style="left:155px;top:522px" width="10" height="11"><path d="M3 1v6l-2-1 3 4h4l1-4-4-1V1z" fill="#fff" stroke="#000" stroke-width="0.8"/></svg>
<div class="t" style="left:172.70px;top:524px;font-size:8px;letter-spacing:0.475px;color:#000;-webkit-text-stroke:0.25px #000;">CAD&nbsp;-&nbsp;Microsoft&nbsp;V</div>
<div class="raise" style="left:265px;top:520px;width:113px;height:15px;box-shadow:inset -1px -1px 0 #808080"></div>
<svg class="a" style="left:268px;top:522px" width="11" height="11"><path d="M1 6l5-4 4 3-5 5z" fill="#902070" stroke="#400030" stroke-width="0.7"/><path d="M3 5l4 3" stroke="#fff" stroke-width="0.8"/></svg>
<div class="t" style="left:282.00px;top:524px;font-size:8px;letter-spacing:-1.550px;color:#000;-webkit-text-stroke:0.25px #000;">CCAD</div>
<svg class="a" style="left:301px;top:523px" width="58" height="10" fill="none" stroke="#000" stroke-width="1">
 <path d="M1 2h8M5 0v9M2 5h6M1 9h8"/><path d="M12 1h7M15.5 1v8M12 5h7M12 9h7"/><path d="M22 1h7M25 1v8M22 5h6M22 9l7-3"/>
 <path d="M32 5h6"/><path d="M41 1h7M44.5 1v8M41 5h7M42 9h6"/><path d="M51 1h6M54 1v8M51 5h6M51 9l6-2"/>
</svg>
<div class="a" style="left:380px;top:519px;width:111px;height:16px;border-top:1px solid #000;border-left:1px solid #000;border-right:1px solid #fff;border-bottom:1px solid #fff;background:repeating-conic-gradient(#fff 0 25%,#c0c0c0 0 50%) 0 0/2px 2px"></div>
<div class="a" style="left:381px;top:520px;width:109px;height:1px;background:#808080"></div>
<svg class="a" style="left:383px;top:522px" width="12" height="11"><circle cx="6" cy="6" r="4" fill="none" stroke="#102060" stroke-width="1.5"/><path d="M5 1v10" stroke="#102060" stroke-width="1.2"/></svg>
<div class="t" style="left:396.80px;top:524px;font-size:8px;letter-spacing:0.109px;color:#000;-webkit-text-stroke:0.25px #000;">CV&nbsp;Solution&nbsp;[d:\general]</div>
<svg class="a" style="left:615px;top:519px" width="102" height="19">
 <rect x="6.5" y="5.5" width="10" height="6" fill="#d8d8d8" stroke="#000" stroke-width="1"/><path d="M8.5 5V3M11.5 5V3M14.5 5V3" stroke="#000"/><path d="M8 8.5h2M11 8.5h2M14 8.5h1" stroke="#000"/>
 <path d="M20.5 1v17" stroke="#808080"/>
 <rect x="26.5" y="3.5" width="8" height="10" fill="#ffffd0" stroke="#000" stroke-width="1"/><path d="M29 6.5q1.5-2 3 0t-1.5 2v1.5" fill="none" stroke="#000" stroke-width="1.2"/><rect x="30" y="11" width="1.2" height="1.2" fill="#000"/><path d="M31 14l1 1.5" stroke="#000"/>
 <path d="M40.5 1v17" stroke="#fff"/>
 <path d="M45 4.5h4v2.5h-4M45 9.5h4M46 12l1.5 1.5 1.5-1.5" stroke="#000" stroke-width="1.2" fill="none"/>
 <path d="M57.5 1v17" stroke="#808080"/><path d="M58.5 1v17" stroke="#fff"/>
</svg>
<svg class="a" style="left:676px;top:526px" width="7" height="5"><path d="M3 0l-3 2.5 3 2.5zM7 0l-3 2.5 3 2.5z" fill="#000"/></svg>
<div class="t" style="left:689.00px;top:523px;font-size:9px;letter-spacing:-0.625px;color:#000;">12:00</div>
<div class="t" style="left:298.40px;top:517px;font-size:18px;letter-spacing:2.038px;color:rgba(255,255,255,0.9);">laserfair</div>
</body></html>
